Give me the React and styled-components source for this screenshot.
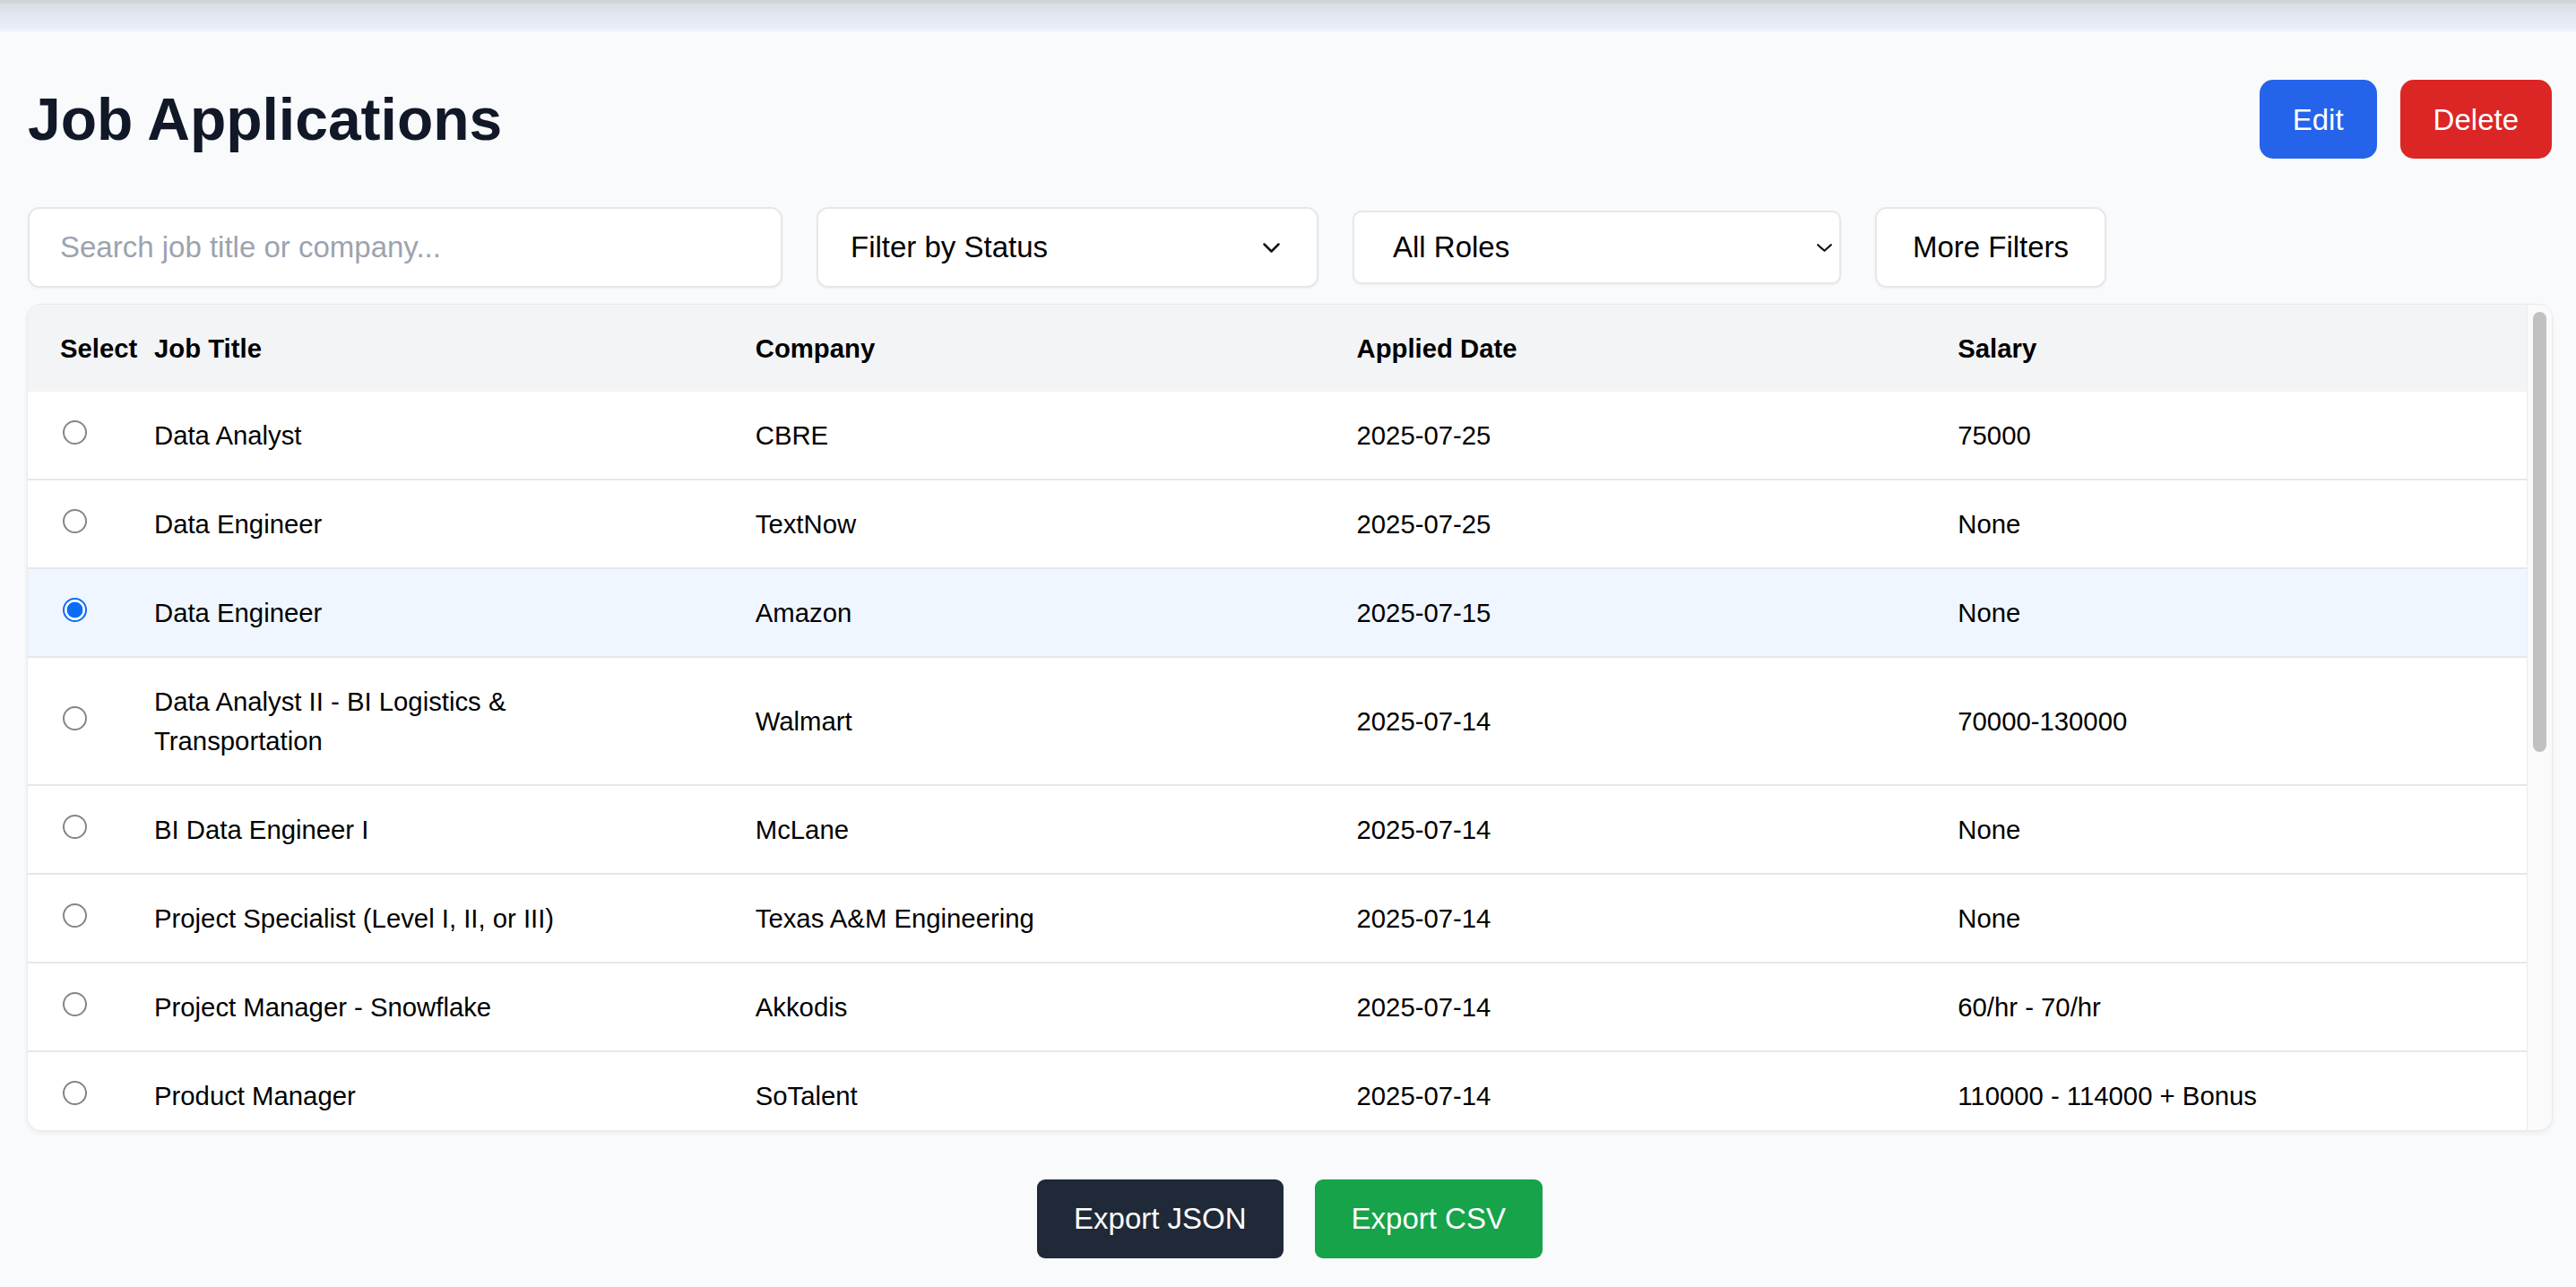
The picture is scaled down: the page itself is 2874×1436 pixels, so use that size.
import styled, { createGlobalStyle, css } from "styled-components";
import { useState } from "react";

const GlobalStyle = createGlobalStyle`
  html, body {
    margin: 0;
    padding: 0;
    background: #f9fafb;
    font-family: "Liberation Sans", Arial, Helvetica, sans-serif;
    color: #000;
  }
  * {
    box-sizing: border-box;
  }
`;

const jobs = [
  { id: 1, title: "Data Analyst", company: "CBRE", date: "2025-07-25", salary: "75000" },
  { id: 2, title: "Data Engineer", company: "TextNow", date: "2025-07-25", salary: "None" },
  { id: 3, title: "Data Engineer", company: "Amazon", date: "2025-07-15", salary: "None" },
  {
    id: 4,
    title: "Data Analyst II - BI Logistics & Transportation",
    company: "Walmart",
    date: "2025-07-14",
    salary: "70000-130000",
  },
  { id: 5, title: "BI Data Engineer I", company: "McLane", date: "2025-07-14", salary: "None" },
  {
    id: 6,
    title: "Project Specialist (Level I, II, or III)",
    company: "Texas A&M Engineering",
    date: "2025-07-14",
    salary: "None",
  },
  { id: 7, title: "Project Manager - Snowflake", company: "Akkodis", date: "2025-07-14", salary: "60/hr - 70/hr" },
  { id: 8, title: "Product Manager", company: "SoTalent", date: "2025-07-14", salary: "110000 - 114000 + Bonus" },
];

const VISIBLE_SHARE = 0.542;

const Chevron = ({ w = 21, h = 13, stroke = 2.5 }) => (
  <svg width={w} height={h} viewBox={`0 0 ${w} ${h}`} fill="none">
    <path
      d={`M${stroke} ${stroke} L${w / 2} ${h - stroke} L${w - stroke} ${stroke}`}
      stroke="#111"
      strokeWidth={stroke}
      strokeLinecap="round"
      strokeLinejoin="round"
    />
  </svg>
);

const App = () => {
  const [selected, setSelected] = useState(3);

  return (
    <>
      <GlobalStyle />
      <TopShade />
      <Page>
        <Header>
          <Title>Job Applications</Title>
          <Actions>
            <ActionButton $tone="blue">Edit</ActionButton>
            <ActionButton $tone="red">Delete</ActionButton>
          </Actions>
        </Header>

        <Filters>
          <SearchInput placeholder="Search job title or company..." />
          <SelectButton $width={560} $height={90} $pl={36} $pr={40} $radius={13}>
            <span>Filter by Status</span>
            <Chevron />
          </SelectButton>
          <SelectButton $width={545} $height={82} $pl={43} $pr={7} $radius={10}>
            <span>All Roles</span>
            <Chevron w={19} h={11} stroke={2.2} />
          </SelectButton>
          <MoreButton>More Filters</MoreButton>
        </Filters>

        <TableCard>
          <TableArea>
            <Table>
              <colgroup>
                <col style={{ width: 105 }} />
                <col />
                <col />
                <col />
                <col />
              </colgroup>
              <thead>
                <HeadRow>
                  <Th>Select</Th>
                  <Th>Job Title</Th>
                  <Th>Company</Th>
                  <Th>Applied Date</Th>
                  <Th>Salary</Th>
                </HeadRow>
              </thead>
              <tbody>
                {jobs.map((job) => (
                  <Row key={job.id} $selected={selected === job.id}>
                    <Td>
                      <Radio
                        type="radio"
                        name="job"
                        checked={selected === job.id}
                        onChange={() => setSelected(job.id)}
                      />
                    </Td>
                    <Td>{job.title}</Td>
                    <Td>{job.company}</Td>
                    <Td>{job.date}</Td>
                    <Td>{job.salary}</Td>
                  </Row>
                ))}
              </tbody>
            </Table>
          </TableArea>
          <ScrollTrack>
            <Thumb style={{ height: `${VISIBLE_SHARE * 100}%` }} />
          </ScrollTrack>
        </TableCard>

        <ExportBar>
          <ExportButton $tone="dark">Export JSON</ExportButton>
          <ExportButton $tone="green">Export CSV</ExportButton>
        </ExportBar>
      </Page>
    </>
  );
};

const TopShade = styled.div`
  height: 36px;
  background: linear-gradient(
    to bottom,
    #d2d3d7 0,
    #d2d3d7 3px,
    #d9dce3 4px,
    #e2e6ee 16px,
    #eaeff8 32px,
    #f4f6fa 36px
  );
`;

const Page = styled.main`
  padding: 53px 27px 16px 31px;
`;

const Header = styled.div`
  display: flex;
  align-items: center;
  justify-content: space-between;
  height: 88px;
`;

const Title = styled.h1`
  margin: 0;
  font-size: 66px;
  line-height: 73px;
  font-weight: 700;
  color: #111827;
`;

const Actions = styled.div`
  display: flex;
  gap: 26px;
`;

const tones = {
  blue: "#2563eb",
  red: "#dc2626",
  dark: "#1f2937",
  green: "#16a34a",
};

const ActionButton = styled.button`
  height: 88px;
  padding: 0 37px;
  border: none;
  border-radius: 15px;
  background: ${(p) => tones[p.$tone]};
  color: #fff;
  font-family: inherit;
  font-size: 33px;
  line-height: 51px;
  cursor: pointer;
`;

const Filters = styled.div`
  display: flex;
  align-items: center;
  gap: 38px;
  margin-top: 54px;
  height: 90px;
`;

const fieldBox = css`
  background: #fff;
  border: 2px solid #e5e7eb;
  box-shadow: 0 1px 3px rgba(0, 0, 0, 0.05);
  font-family: inherit;
  font-size: 33px;
  color: #000;
`;

const SearchInput = styled.input`
  ${fieldBox};
  width: 842px;
  height: 90px;
  padding: 0 34px;
  border-radius: 13px;
  outline: none;
  &::placeholder {
    color: #9ca3af;
  }
`;

const SelectButton = styled.button`
  ${fieldBox};
  display: flex;
  align-items: center;
  justify-content: space-between;
  width: ${(p) => p.$width}px;
  height: ${(p) => p.$height}px;
  padding: 0 ${(p) => p.$pr}px 0 ${(p) => p.$pl}px;
  border-radius: ${(p) => p.$radius}px;
  text-align: left;
  cursor: pointer;
`;

const MoreButton = styled.button`
  ${fieldBox};
  width: 258px;
  height: 90px;
  border-radius: 13px;
  text-align: center;
  cursor: pointer;
`;

const TableCard = styled.div`
  display: flex;
  margin-top: 19px;
  height: 921px;
  background: #fff;
  border-radius: 15px;
  overflow: hidden;
  box-shadow: 0 0 0 1px #e9eaee, 0 3px 6px rgba(0, 0, 0, 0.07);
`;

const TableArea = styled.div`
  flex: 1;
  min-width: 0;
  overflow: hidden;
`;

const ScrollTrack = styled.div`
  flex: 0 0 28px;
  padding: 8px 6px;
  background: #fafafa;
  border-left: 1px solid #ececec;
`;

const Thumb = styled.div`
  width: 100%;
  background: #c1c1c1;
  border-radius: 8px;
`;

const Table = styled.table`
  width: 100%;
  table-layout: fixed;
  border-collapse: collapse;
`;

const HeadRow = styled.tr`
  background: #f3f4f6;
`;

const Th = styled.th`
  padding: 27px 80px 26px 36px;
  font-size: 29.3px;
  line-height: 44px;
  font-weight: 700;
  text-align: left;
  white-space: nowrap;
  overflow: visible;
`;

const Row = styled.tr`
  background: ${(p) => (p.$selected ? "#eff6ff" : "#fff")};
`;

const Td = styled.td`
  padding: 27px 80px 26px 36px;
  border-bottom: 2px solid #e5e7eb;
  font-size: 29.3px;
  line-height: 44px;
  vertical-align: middle;
  color: #000;
`;

const Radio = styled.input`
  appearance: none;
  display: block;
  width: 27px;
  height: 27px;
  margin: -8px 0 0 3px;
  border: 2px solid #858585;
  border-radius: 50%;
  background: #fff;
  cursor: pointer;
  &:checked {
    border: 2.5px solid #0b6cf7;
    background: radial-gradient(circle, #0b6cf7 0 8.5px, #fff 9.2px);
  }
`;

const ExportBar = styled.div`
  display: flex;
  justify-content: center;
  gap: 35px;
  margin-top: 55px;
`;

const ExportButton = styled.button`
  height: 88px;
  padding: 0 41px;
  border: none;
  border-radius: 9px;
  background: ${(p) => tones[p.$tone]};
  color: #fff;
  font-family: inherit;
  font-size: 33px;
  cursor: pointer;
`;

export default App;
